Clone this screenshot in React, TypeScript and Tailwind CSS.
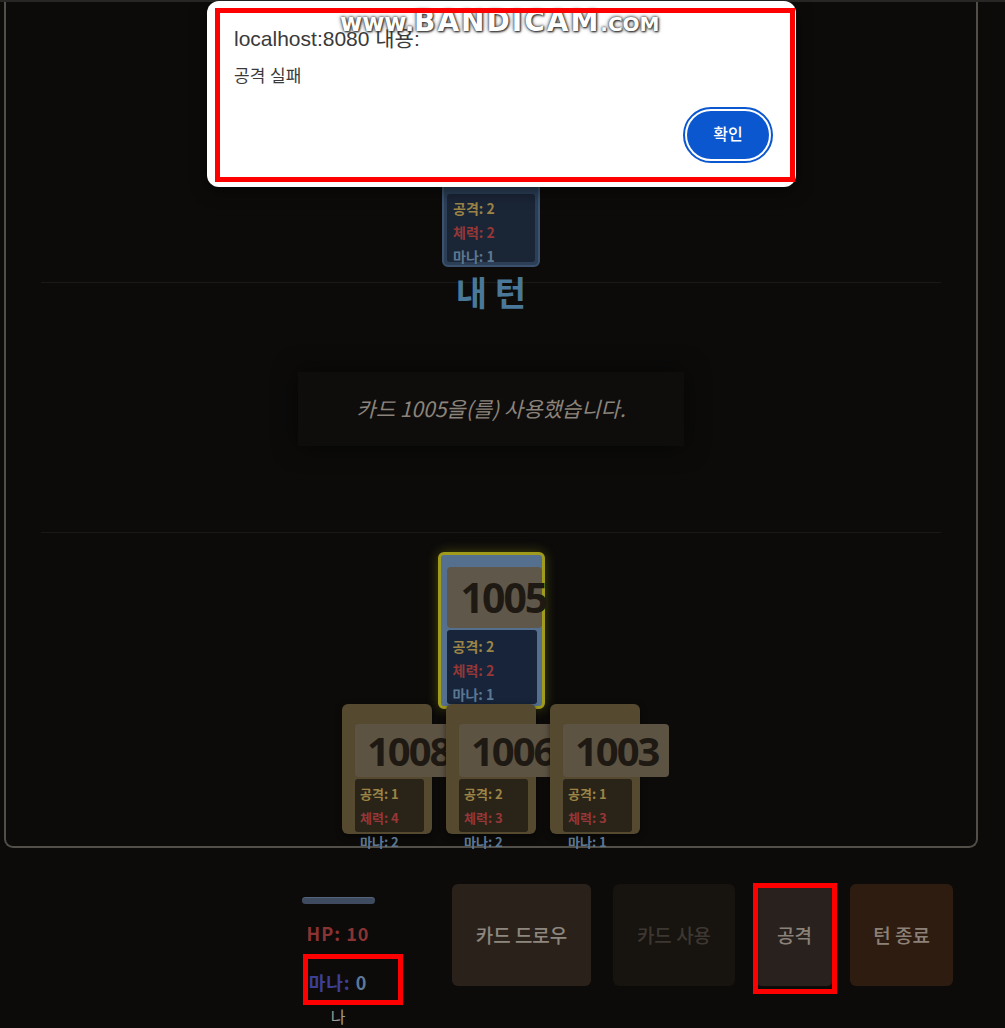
import React from "react";

function StatLines({
  atk,
  hp,
  mana,
  size,
}: {
  atk: number;
  hp: number;
  mana: number;
  size: string;
}) {
  return (
    <>
      <div className={`${size} leading-[24px] font-bold text-[#9c8446] whitespace-nowrap`}>공격: {atk}</div>
      <div className={`${size} leading-[24px] font-bold text-[#963737] whitespace-nowrap`}>체력: {hp}</div>
      <div className={`${size} leading-[24px] font-bold text-[#5b7893] whitespace-nowrap`}>마나: {mana}</div>
    </>
  );
}

function HandCard({ id, atk, hp, mana }: { id: number; atk: number; hp: number; mana: number }) {
  return (
    <div className="relative w-[90px] h-[130px] rounded-[6px] bg-[#55492f] pt-[20px] pl-[13px] shadow-[0_2px_6px_rgba(0,0,0,0.5)]">
      <div className="w-[106px] h-[53px] rounded-[4px] bg-[#5d5343] flex items-center pl-[12px]">
        <span className="font-['Open_Sans',sans-serif] text-[40px] font-bold tracking-[-2px] text-[#1e1912] leading-none">
          {id}
        </span>
      </div>
      <div className="mt-[2px] w-[69px] h-[53px] rounded-[3px] bg-[#2a2317] pl-[5px] pt-[3px]">
        <StatLines atk={atk} hp={hp} mana={mana} size="text-[13px]" />
      </div>
    </div>
  );
}

export default function App() {
  return (
    <div className="relative w-[1005px] h-[1028px] overflow-hidden bg-[#0c0b0a] font-['Noto_Sans_CJK_KR',sans-serif]">
      <div className="h-[2px] bg-[#282725]" />

      {/* Board */}
      <div className="ml-[4px] w-[974px] h-[846px] border-2 border-t-0 border-[#524e48] rounded-b-[9px] flex flex-col items-center">
        {/* Opponent area */}
        <div className="self-stretch mx-[35px] h-[281px] border-b border-[#1b1917] flex justify-center items-end pb-[15px]">
          <div className="relative w-[98px] h-[150px] rounded-[6px] border-2 border-[#3a526e] bg-[#2c3f57] p-[3px] flex flex-col">
            <div className="flex-1" />
            <div className="h-[68px] rounded-[3px] bg-[#1a2536] pl-[6px] pt-[2px]">
              <StatLines atk={2} hp={2} mana={1} size="text-[14px]" />
            </div>
          </div>
        </div>

        <div className="mt-[-11px] text-[34px] leading-[40px] font-bold text-[#4a7898]">내 턴</div>

        <div className="mt-[60px] w-[386px] h-[74px] bg-[#0f0d0b] shadow-[0_0_24px_rgba(0,0,0,0.6)] flex items-center justify-center">
          <span className="italic text-[21px] text-[#8b847c]">카드 1005을(를) 사용했습니다.</span>
        </div>

        {/* Player area */}
        <div className="mt-[86px] self-stretch mx-[35px] border-t border-[#1b1917] pt-[19px] flex flex-col items-center">
          <div className="relative w-[107px] h-[157px] rounded-[6px] border-[3px] border-[#a09b1c] bg-[#55708f] pt-[12px] pl-[6px] shadow-[0_0_12px_rgba(140,135,20,0.45)]">
            <div className="w-[95px] h-[61px] rounded-[4px] bg-[#5f574a] flex items-center pl-[14px]">
              <span className="font-['Open_Sans',sans-serif] text-[41px] font-bold tracking-[-2px] text-[#1e1912] leading-none">
                1005
              </span>
            </div>
            <div className="mt-[2px] w-[90px] h-[74px] rounded-[3px] bg-[#17243a] pl-[6px] pt-[4px] overflow-hidden">
              <StatLines atk={2} hp={2} mana={1} size="text-[14px]" />
            </div>
          </div>

          <div className="mt-[-5px] flex gap-[14px]">
            <HandCard id={1008} atk={1} hp={4} mana={2} />
            <HandCard id={1006} atk={2} hp={3} mana={2} />
            <HandCard id={1003} atk={1} hp={3} mana={1} />
          </div>
        </div>
      </div>

      {/* Bottom controls */}
      <div className="flex items-start pt-[36px]">
        <div className="ml-[288px] w-[100px] flex flex-col items-center">
          <div className="mt-[13px] w-[73px] h-[7px] rounded-full bg-[#3f4c5f] shadow-[inset_0_1px_0_rgba(120,140,170,0.4)]" />
          <div className="mt-[17px] text-[18px] leading-[24px] font-bold tracking-[1px] text-[#8a3333]">HP: 10</div>
          <div className="mt-[25px] text-[18px] leading-[24px] font-bold tracking-[1px]">
            <span className="text-[#3d3f95]">마나:</span> <span className="text-[#5c7899]">0</span>
          </div>
          <div className="mt-[11px] text-[16px] leading-[22px] text-[#a19c96]">나</div>
        </div>
        <div className="ml-[64px] flex">
          <button className="w-[139px] h-[102px] rounded-[6px] bg-[#2a211b] text-[19px] font-medium text-[#8e877f]">
            카드 드로우
          </button>
          <button className="ml-[22px] w-[122px] h-[102px] rounded-[6px] bg-[#17130f] text-[19px] font-medium text-[#3d3731]">
            카드 사용
          </button>
          <button className="ml-[21px] w-[77px] h-[102px] rounded-[6px] bg-[#29211d] text-[19px] font-medium text-[#8a8279]">
            공격
          </button>
          <button className="ml-[17px] w-[103px] h-[102px] rounded-[6px] bg-[#2e1c11] text-[19px] font-medium text-[#8b8178]">
            턴 종료
          </button>
        </div>
      </div>

      {/* Alert dialog */}
      <div className="absolute left-[207px] top-[1px] w-[589px] h-[186px] bg-white rounded-[12px] shadow-[0_4px_16px_rgba(0,0,0,0.5)] font-['Liberation_Sans','Noto_Sans_CJK_KR',sans-serif] pl-[27px] pr-[27px] pt-[24px] flex flex-col">
        <div className="text-[21px] leading-[28px] text-[#3a3a3a]">localhost:8080 내용:</div>
        <div className="mt-[12px] text-[17px] leading-[24px] text-[#3a3a3a]">공격 실패</div>
        <div className="mt-[22px] flex justify-end">
          <button className="w-[82px] h-[48px] rounded-full bg-[#0b57d0] text-white text-[16px] font-medium outline-2 outline-offset-2 outline-[#0b57d0]">
            확인
          </button>
        </div>
      </div>

      {/* Watermark */}
      <div className="absolute left-[340px] top-[6px] flex items-baseline font-['DejaVu_Sans',sans-serif] font-bold text-white [text-shadow:0_0_2px_#333,0_0_4px_#555,1px_1px_2px_#222]">
        <span className="text-[24px] leading-[32px]">www.</span>
        <span className="text-[28px] leading-[32px] tracking-[2px]">BANDICAM</span>
        <span className="text-[20px] leading-[32px]">.COM</span>
      </div>

      {/* Annotation boxes */}
      <div className="absolute left-[215px] top-[8px] w-[580px] h-[174px] border-[5px] border-[#ff0000]" />
      <div className="absolute left-[303px] top-[954px] w-[100px] h-[51px] border-[5px] border-[#ff0000]" />
      <div className="absolute left-[753px] top-[883px] w-[84px] h-[111px] border-[5px] border-[#ff0000]" />
    </div>
  );
}
